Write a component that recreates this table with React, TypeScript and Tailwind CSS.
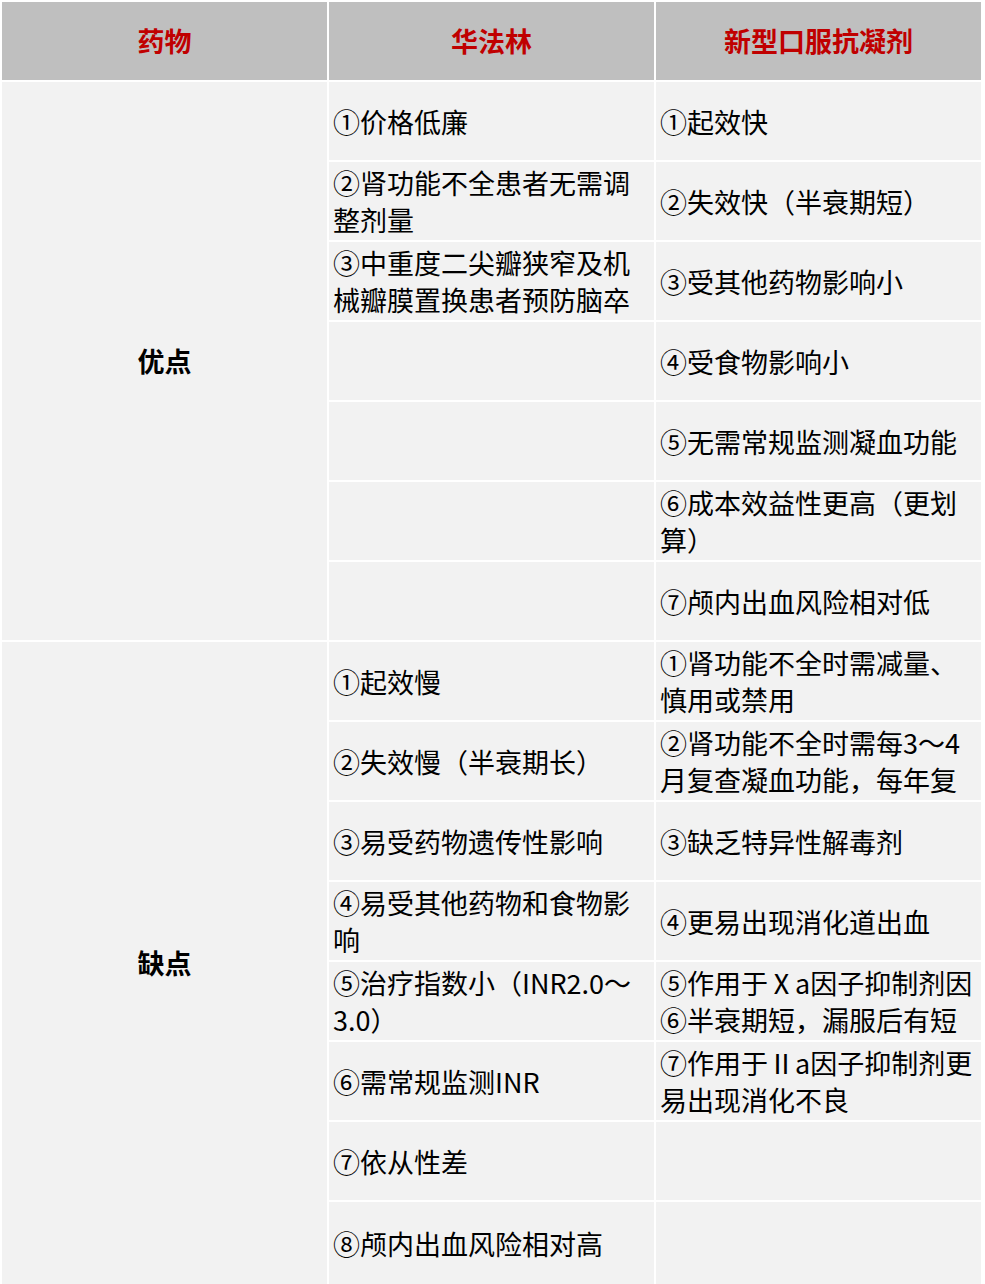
import React from "react";

type Row = { warfarin: string[]; noac: string[] };

const PROS: Row[] = [
  { warfarin: ["①价格低廉"], noac: ["①起效快"] },
  { warfarin: ["②肾功能不全患者无需调", "整剂量"], noac: ["②失效快（半衰期短）"] },
  {
    warfarin: ["③中重度二尖瓣狭窄及机", "械瓣膜置换患者预防脑卒"],
    noac: ["③受其他药物影响小"],
  },
  { warfarin: [], noac: ["④受食物影响小"] },
  { warfarin: [], noac: ["⑤无需常规监测凝血功能"] },
  { warfarin: [], noac: ["⑥成本效益性更高（更划", "算）"] },
  { warfarin: [], noac: ["⑦颅内出血风险相对低"] },
];

const CONS: Row[] = [
  { warfarin: ["①起效慢"], noac: ["①肾功能不全时需减量、", "慎用或禁用"] },
  {
    warfarin: ["②失效慢（半衰期长）"],
    noac: ["②肾功能不全时需每3～4", "月复查凝血功能，每年复"],
  },
  { warfarin: ["③易受药物遗传性影响"], noac: ["③缺乏特异性解毒剂"] },
  { warfarin: ["④易受其他药物和食物影", "响"], noac: ["④更易出现消化道出血"] },
  {
    warfarin: ["⑤治疗指数小（INR2.0～", "3.0）"],
    noac: ["⑤作用于Ⅹa因子抑制剂因", "⑥半衰期短，漏服后有短"],
  },
  { warfarin: ["⑥需常规监测INR"], noac: ["⑦作用于Ⅱa因子抑制剂更", "易出现消化不良"] },
  { warfarin: ["⑦依从性差"], noac: [] },
  { warfarin: ["⑧颅内出血风险相对高"], noac: [] },
];

function Cell({ lines }: { lines: string[] }) {
  return (
    <div className="flex flex-col justify-center overflow-hidden whitespace-nowrap bg-[#f2f2f2] px-[4px] text-[27px] leading-[37px] text-black">
      {lines.map((l) => (
        <div key={l}>{l}</div>
      ))}
    </div>
  );
}

export default function App() {
  const font = { fontFamily: '"Noto Sans CJK SC", "Noto Sans", sans-serif' };
  return (
    <div
      style={font}
      className="h-[1284px] w-[985px] overflow-hidden bg-white pl-[2px] pt-[2px]"
    >
      <div className="grid grid-cols-[325px_325px_325px] grid-rows-[repeat(15,78px)_82px] gap-[2px]">
        {["药物", "华法林", "新型口服抗凝剂"].map((h) => (
          <div
            key={h}
            className="flex items-center justify-center bg-[#bfbfbf] text-[27px] font-bold text-[#c00000]"
          >
            {h}
          </div>
        ))}

        <div className="row-span-7 flex items-center justify-center bg-[#f2f2f2] text-[27px] font-bold text-black">
          优点
        </div>
        {PROS.map((r, i) => (
          <React.Fragment key={"p" + i}>
            <Cell lines={r.warfarin} />
            <Cell lines={r.noac} />
          </React.Fragment>
        ))}

        <div className="row-span-8 flex items-center justify-center bg-[#f2f2f2] text-[27px] font-bold text-black">
          缺点
        </div>
        {CONS.map((r, i) => (
          <React.Fragment key={"c" + i}>
            <Cell lines={r.warfarin} />
            <Cell lines={r.noac} />
          </React.Fragment>
        ))}
      </div>
    </div>
  );
}
